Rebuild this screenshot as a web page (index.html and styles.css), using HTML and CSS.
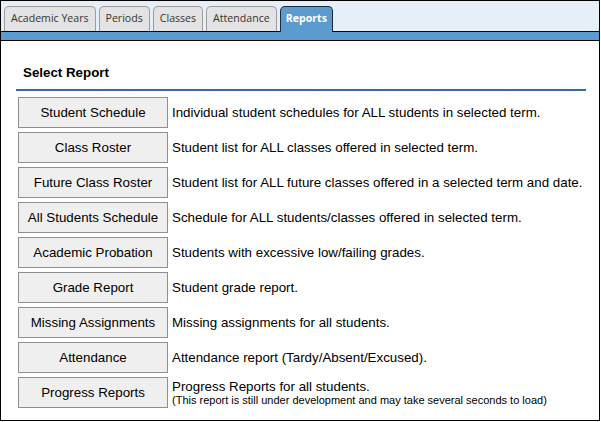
FILE: index.html
```html
<!DOCTYPE html>
<html>
<head>
<meta charset="utf-8">
<link rel="stylesheet" href="styles.css">
</head>
<body>
<div class="frame">
  <div class="tabbar">
    <div class="tab">Academic Years</div>
    <div class="tab">Periods</div>
    <div class="tab">Classes</div>
    <div class="tab">Attendance</div>
    <div class="tab active">Reports</div>
  </div>
  <div class="bluebar"></div>
  <div class="content">
    <div class="heading">Select Report</div>
    <div class="rows">
      <div class="row"><button class="btn">Student Schedule</button><div class="desc">Individual student schedules for ALL students in selected term.</div></div>
      <div class="row"><button class="btn">Class Roster</button><div class="desc">Student list for ALL classes offered in selected term.</div></div>
      <div class="row"><button class="btn">Future Class Roster</button><div class="desc">Student list for ALL future classes offered in a selected term and date.</div></div>
      <div class="row"><button class="btn">All Students Schedule</button><div class="desc">Schedule for ALL students/classes offered in selected term.</div></div>
      <div class="row"><button class="btn">Academic Probation</button><div class="desc">Students with excessive low/failing grades.</div></div>
      <div class="row"><button class="btn">Grade Report</button><div class="desc">Student grade report.</div></div>
      <div class="row"><button class="btn">Missing Assignments</button><div class="desc">Missing assignments for all students.</div></div>
      <div class="row"><button class="btn">Attendance</button><div class="desc">Attendance report (Tardy/Absent/Excused).</div></div>
      <div class="row"><button class="btn">Progress Reports</button><div class="desc"><div>Progress Reports for all students.</div><div class="note">(This report is still under development and may take several seconds to load)</div></div></div>
    </div>
  </div>
</div>
</body>
</html>
```
FILE: styles.css
```css
html, body {
  margin: 0;
  padding: 0;
  background: #fff;
}
.frame {
  box-sizing: border-box;
  width: 600px;
  height: 421px;
  border: 1px solid #000;
  background: #fff;
  font-family: "Liberation Sans", Arial, sans-serif;
}
.tabbar {
  height: 30px;
  background: #e6eef7;
  border-bottom: 1px solid #000;
  display: flex;
  align-items: flex-end;
  gap: 3px;
  padding-left: 3px;
}
.tab {
  box-sizing: border-box;
  height: 25px;
  padding: 0 6px;
  border: 1px solid #9c9c9c;
  border-bottom: none;
  border-radius: 5px 5px 0 0;
  background: #e3e3e3;
  font-family: "Open Sans", sans-serif;
  font-size: 10.6px;
  line-height: 23px;
  color: #333;
}
.tab.active {
  height: 26px;
  margin-bottom: -1px;
  background: #5b9bd0;
  border-color: #1a2a3a;
  color: #fff;
  font-weight: bold;
  padding: 0 5px;
}
.bluebar {
  height: 8px;
  background: #5b9bd0;
  border-bottom: 1px solid #000;
}
.content {
  padding: 0 13px 0 15px;
}
.heading {
  margin-top: 24px;
  padding: 0 0 9px 7px;
  border-bottom: 2px solid #3a6b9e;
  font-size: 13.33px;
  font-weight: bold;
  line-height: 15px;
  color: #000;
}
.rows {
  padding: 6px 0 0 2px;
  display: flex;
  flex-direction: column;
  gap: 4px;
}
.row {
  display: flex;
  align-items: center;
  gap: 4px;
  height: 31px;
}
.btn {
  box-sizing: border-box;
  width: 150px;
  height: 31px;
  flex: none;
  margin: 0;
  padding: 0;
  border: 1px solid #8f8f8f;
  background: #efefef;
  font-family: "Liberation Sans", Arial, sans-serif;
  font-size: 13.33px;
  color: #000;
}
.desc {
  font-size: 13.33px;
  line-height: 15px;
  color: #000;
}
.note {
  font-size: 11px;
  line-height: 13px;
}
```
